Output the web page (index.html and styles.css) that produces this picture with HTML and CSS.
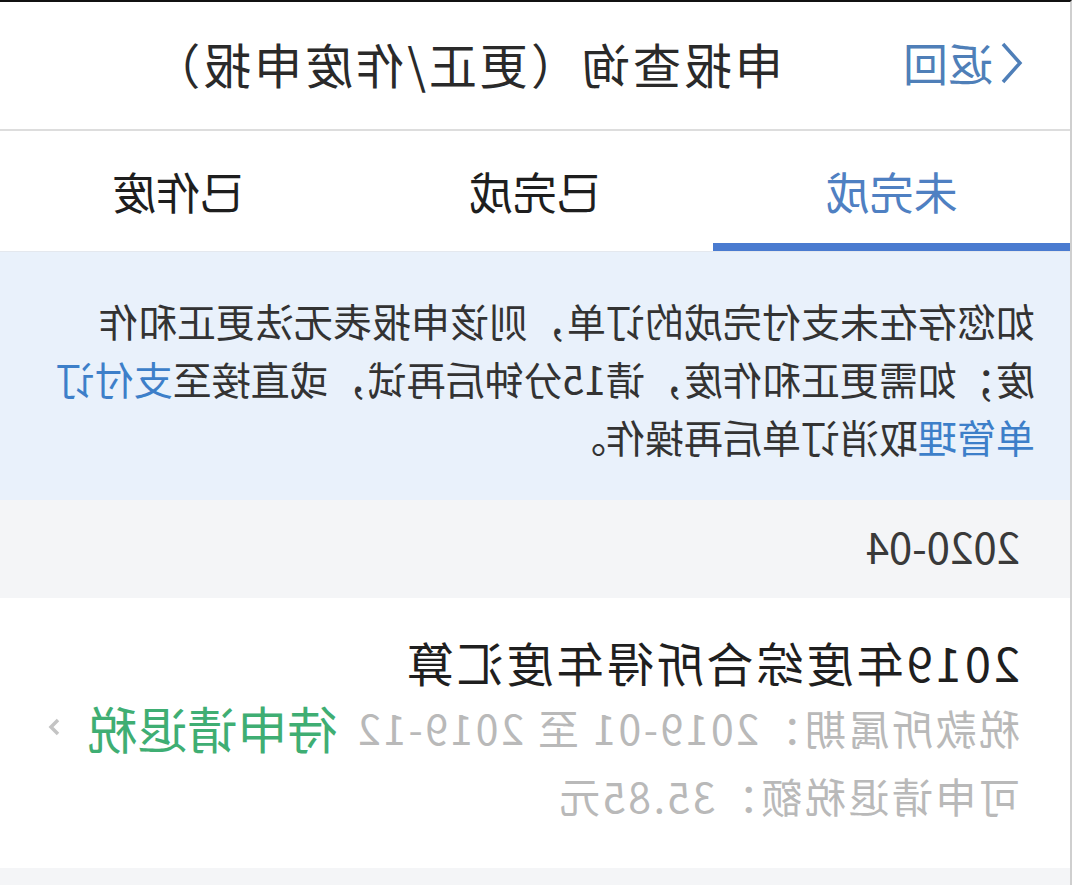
FILE: index.html
```html
<!DOCTYPE html>
<html lang="zh-CN">
  <head>
    <meta charset="UTF-8" />
    <meta name="viewport" content="width=device-width, initial-scale=1.0" />
    <title>申报查询</title>
    <link rel="stylesheet" href="styles.css">
  </head>
  <body>
    <div class="page">
      <div class="header">
        <div class="back">
          <svg width="26" height="44" viewBox="0 0 26 44">
            <polyline points="22,3 5,22 22,41" fill="none" stroke="#4f7fb8" stroke-width="3.5" />
          </svg>
          <span>返回</span>
        </div>
        <div class="title">申报查询（更正/作废申报）</div>
      </div>

      <div class="tabs">
        <div class="tab active">未完成</div>
        <div class="tab">已完成</div>
        <div class="tab">已作废</div>
      </div>

      <div class="notice">
        <p>如您存在未支付完成的订单，则该申报表无法更正和作废；如需更正和作废，请15分钟后再试，或直接至<span class="link">支付订单管理</span>取消订单后再操作。</p>
      </div>

      <div class="month">2020-04</div>

      <div class="card">
        <div class="card-title">2019年度综合所得年度汇算</div>
        <div class="card-row">
          <span class="muted">税款所属期：2019-01 至 2019-12</span>
          <span class="status">待申请退税</span>
          <svg class="arrow" width="16" height="20" viewBox="0 0 16 20">
            <polyline points="4,3 11,10 4,17" fill="none" stroke="#c4c4c4" stroke-width="3.5" />
          </svg>
        </div>
        <div class="card-row">
          <span class="muted">可申请退税额：35.85元</span>
        </div>
      </div>
    </div>
  </body>
</html>
```

FILE: styles.css
```css
* {
  margin: 0;
  padding: 0;
  box-sizing: border-box;
}
body,
html {
  width: 100%;
  height: 100%;
  overflow: hidden;
  background: #f4f5f7;
  font-family: "Noto Sans CJK SC", "Noto Sans", sans-serif;
}
/* the screenshot is a mirror image, so the whole page is flipped */
.page {
  width: 1072px;
  height: 885px;
  transform: scaleX(-1);
  border-top: 2px solid #111;
  border-left: 2px solid #cfcfcf;
  background: #f4f5f7;
}
.header {
  display: flex;
  align-items: center;
  height: 129px;
  padding: 0 0 6px 45px;
  background: #fff;
  border-bottom: 2px solid #dddddd;
}
.back {
  display: flex;
  align-items: center;
  gap: 6px;
  color: #4f7fb8;
  font-size: 45px;
}
.title {
  margin-left: 120px;
  font-size: 48px;
  letter-spacing: 3px;
  color: #2a2a2a;
}
.tabs {
  display: grid;
  grid-template-columns: repeat(3, 1fr);
  height: 121px;
  background: #fff;
  border-bottom: 1px solid #e4e8ee;
}
.tab {
  display: flex;
  align-items: center;
  justify-content: center;
  padding-top: 8px;
  font-size: 44px;
  color: #1e1e1e;
  border-bottom: 8px solid transparent;
}
.tab.active {
  color: #4f80c2;
  border-bottom-color: #4a7bd0;
}
.notice {
  height: 248px;
  padding: 39px 46px 0 35px;
  background: #e9f1fb;
  font-size: 39px;
  line-height: 58px;
  color: #333;
}
.link {
  color: #3d7fc9;
}
.month {
  display: flex;
  align-items: center;
  height: 98px;
  padding: 0 0 8px 50px;
  font-size: 42px;
  color: #3a3a3a;
}
.card {
  height: 270px;
  padding: 33px 0 0 50px;
  background: #fff;
}
.card-title {
  font-size: 47px;
  line-height: 62px;
  letter-spacing: 3px;
  color: #1f1f1f;
  white-space: nowrap;
}
.card-row {
  display: flex;
  align-items: center;
  height: 68px;
  font-size: 41px;
  white-space: nowrap;
}
.card-row > * {
  flex-shrink: 0;
}
.muted {
  color: #b9b9b9;
  letter-spacing: 2.5px;
}
.status {
  margin-left: 18px;
  font-size: 50px;
  color: #3fae73;
}
.arrow {
  margin-left: 26px;
}
```
